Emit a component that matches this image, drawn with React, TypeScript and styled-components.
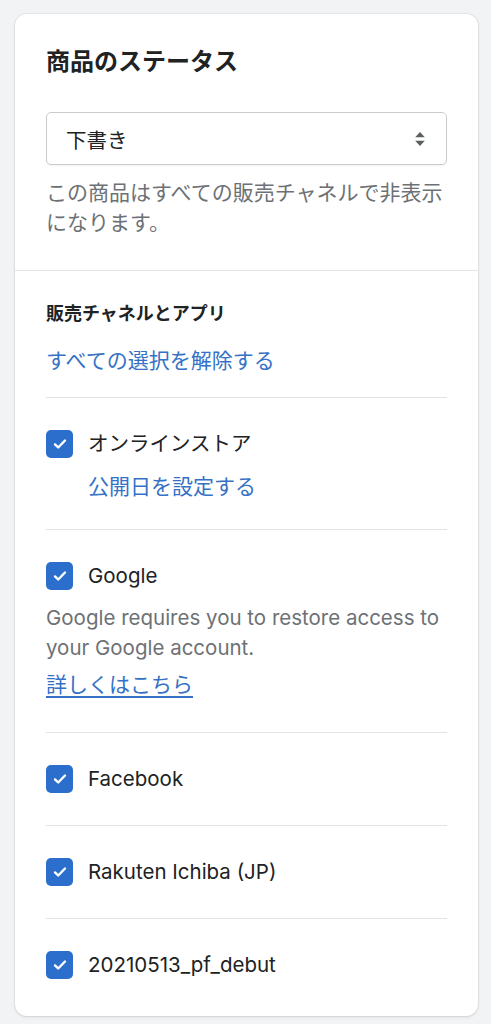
import React from 'react'
import styled, { createGlobalStyle } from 'styled-components'

const GlobalStyle = createGlobalStyle`
  html, body {
    margin: 0;
    padding: 0;
    background: #f2f3f4;
  }
  body {
    font-family: Inter, "Noto Sans CJK JP", sans-serif;
    color: #202223;
  }
`

type Channel = {
  name: string
  link?: string
  note?: string
  noteLink?: string
}

const channels: Channel[] = [
  { name: 'オンラインストア', link: '公開日を設定する' },
  {
    name: 'Google',
    note: 'Google requires you to restore access to your Google account.',
    noteLink: '詳しくはこちら',
  },
  { name: 'Facebook' },
  { name: 'Rakuten Ichiba (JP)' },
  { name: '20210513_pf_debut' },
]

const CheckIcon = () => (
  <svg width="16" height="16" viewBox="0 0 16 16" fill="none">
    <path d="M3 8.4l3.2 3.1 6.8-7" stroke="#fff" strokeWidth="2.4" strokeLinecap="round" strokeLinejoin="round" />
  </svg>
)

const SelectArrows = () => (
  <svg width="12" height="18" viewBox="0 0 12 18">
    <path d="M6 2l4.8 5.2H1.2z" fill="#5c5f62" />
    <path d="M6 16l-4.8-5.2h9.6z" fill="#5c5f62" />
  </svg>
)

const App = () => {
  return (
    <Page>
      <GlobalStyle />
      <Card>
        <StatusSection>
          <Title>商品のステータス</Title>
          <Select>
            <span>下書き</span>
            <SelectArrows />
          </Select>
          <HelpText>この商品はすべての販売チャネルで非表示になります。</HelpText>
        </StatusSection>
        <ChannelSection>
          <SubTitle>販売チャネルとアプリ</SubTitle>
          <ClearLink>すべての選択を解除する</ClearLink>
          <ChannelList>
            {channels.map((c) => (
              <ChannelItem key={c.name}>
                <Row>
                  <Checkbox>
                    <CheckIcon />
                  </Checkbox>
                  <Label>{c.name}</Label>
                </Row>
                {c.link && <IndentLink>{c.link}</IndentLink>}
                {c.note && <Note>{c.note}</Note>}
                {c.noteLink && <UnderLink>{c.noteLink}</UnderLink>}
              </ChannelItem>
            ))}
          </ChannelList>
        </ChannelSection>
      </Card>
    </Page>
  )
}

export default App

const Page = styled.div`
  padding: 14px 13px 7px 15px;
`
const Card = styled.div`
  background: #fff;
  border-radius: 12px;
  box-shadow: 0 0 0 1px rgba(63, 63, 68, 0.05), 0 1px 3px rgba(63, 63, 68, 0.15);
`
const StatusSection = styled.div`
  padding: 34px 31px 32px 31px;
  border-bottom: 1px solid #e1e3e5;
  display: flex;
  flex-direction: column;
`
const Title = styled.div`
  font-size: 24px;
  font-weight: 700;
  line-height: 28px;
`
const Select = styled.div`
  margin-top: 36px;
  height: 53px;
  box-sizing: border-box;
  border: 1px solid #c9cccf;
  border-radius: 5px;
  display: flex;
  align-items: center;
  justify-content: space-between;
  padding: 0 20px 0 19px;
  font-size: 20.5px;
  color: #202223;
  box-shadow: 0 1px 1px rgba(0, 0, 0, 0.05);
`
const HelpText = styled.div`
  margin-top: 13px;
  font-size: 21px;
  line-height: 30px;
  color: #6d7175;
`
const ChannelSection = styled.div`
  padding: 32px 31px 37px 31px;
`
const SubTitle = styled.div`
  font-size: 18px;
  font-weight: 700;
  line-height: 22px;
`
const ClearLink = styled.div`
  margin-top: 22px;
  font-size: 21px;
  line-height: 28px;
  color: #3571c6;
`
const ChannelList = styled.div`
  margin-top: 22px;
  display: flex;
  flex-direction: column;
`
const ChannelItem = styled.div`
  padding: 32px 0;
  border-top: 1px solid #e1e3e5;
  &:last-child {
    padding-bottom: 0;
  }
`
const Row = styled.div`
  display: flex;
  align-items: center;
  gap: 15px;
`
const Checkbox = styled.div`
  width: 27px;
  height: 28px;
  border-radius: 5px;
  background: #2c6ecb;
  display: flex;
  align-items: center;
  justify-content: center;
  flex-shrink: 0;
`
const Label = styled.div`
  font-size: 20.5px;
  line-height: 28px;
  color: #202223;
`
const IndentLink = styled.div`
  margin: 19px 0 0 42px;
  font-size: 21px;
  line-height: 20px;
  color: #3571c6;
`
const Note = styled.div`
  margin-top: 13px;
  font-size: 20.5px;
  line-height: 30px;
  color: #6d7175;
`
const UnderLink = styled.div`
  margin-top: 7px;
  font-size: 21px;
  line-height: 30px;
  color: #3571c6;
  text-decoration: underline;
  text-underline-offset: 4px;
`
